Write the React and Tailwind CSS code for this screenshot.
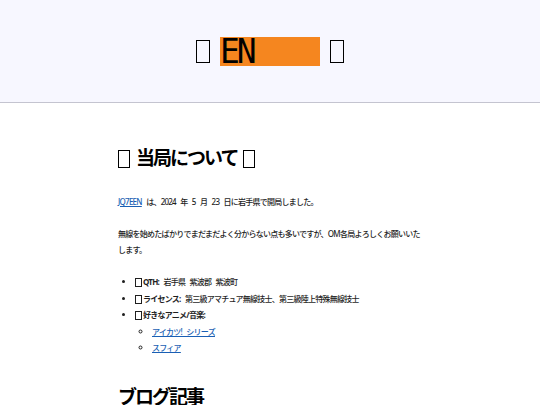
import React from "react";

const Tofu = ({ className = "" }) => (
  <span
    className={`inline-block border border-current align-middle ${className}`}
  />
);

export default function App() {
  return (
    <div
      className="min-h-screen bg-white text-[#1f1f1f]"
      style={{ fontFamily: '"Noto Sans", "Noto Sans CJK JP", sans-serif' }}
    >
      {/* Header */}
      <header className="h-[103px] bg-[#f7f7ff] border-b border-[#c4c4d0] flex items-center justify-center">
        <h1 className="flex items-center gap-[10px] text-[32px] leading-none text-black">
          <Tofu className="w-[14px] h-[23px] border-[1.5px]" />
          <span
            className="bg-[#f5861f] w-[100px] h-[29px] flex items-center text-[33px] tracking-[-3px]"
            style={{ fontFamily: '"DejaVu Sans Mono", monospace' }}
          >
            EN
          </span>
          <Tofu className="w-[14px] h-[23px] border-[1.5px]" />
        </h1>
      </header>

      <main className="w-[304px] mx-auto pt-[46px]">
        <h2 className="flex items-center gap-[6px] text-[19px] tracking-[-2px] font-bold leading-none text-black">
          <Tofu className="w-[12px] h-[18px] border-[1.5px]" />
          <span>当局について</span>
          <Tofu className="w-[12px] h-[18px] border-[1.5px]" />
        </h2>

        <p className="mt-[26px] text-[8px] tracking-[-0.75px] [word-spacing:3px] leading-[16px] font-medium">
          <a href="#" className="text-[#1a5fb4] underline">
            JQ7EEN
          </a>{" "}
          は、2024 年 5 月 23 日に岩手県で開局しました。
        </p>

        <p className="mt-[16px] text-[8px] tracking-[-0.75px] [word-spacing:3px] leading-[16px] font-medium">
          無線を始めたばかりでまだまだよく分からない点も多いですが、OM各局よろしくお願いいたします。
        </p>

        <ul className="mt-[16px] pl-[17px] text-[8px] tracking-[-0.75px] [word-spacing:3px] leading-[16.5px] font-medium list-disc">
          <li>
            <Tofu className="w-[7px] h-[9px] mr-[1px]" />
            <b>QTH:</b> 岩手県 紫波郡 紫波町
          </li>
          <li>
            <Tofu className="w-[7px] h-[9px] mr-[1px]" />
            <b>ライセンス:</b> 第三級アマチュア無線技士、第三級陸上特殊無線技士
          </li>
          <li>
            <Tofu className="w-[7px] h-[9px] mr-[1px]" />
            <b>好きなアニメ/音楽:</b>
            <ul className="pl-[17px] list-[circle]">
              <li>
                <a href="#" className="text-[#1a5fb4] underline">
                  アイカツ! シリーズ
                </a>
              </li>
              <li>
                <a href="#" className="text-[#1a5fb4] underline">
                  スフィア
                </a>
              </li>
            </ul>
          </li>
        </ul>

        <h2 className="mt-[31px] text-[19px] tracking-[-2px] font-bold leading-none text-black">
          ブログ記事
        </h2>
      </main>
    </div>
  );
}
